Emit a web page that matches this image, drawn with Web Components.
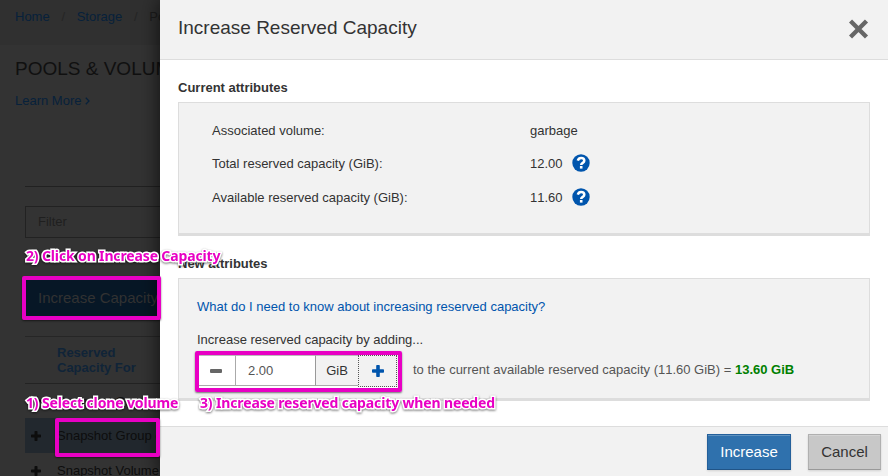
<!DOCTYPE html>
<html lang="en"><head><meta charset="utf-8"><title>Increase Reserved Capacity</title>
<style>
html,body{margin:0;height:476px;overflow:hidden;background:#333}
body{font:13px/15px "Liberation Sans",Arial,sans-serif;color:#333}
</style></head><body>
<app-screen></app-screen>
<script>
const define=(name,html)=>customElements.define(name,class extends HTMLElement{
  constructor(){super();const t=document.createElement('template');t.innerHTML=html;
    this.attachShadow({mode:'open'}).append(t.content.cloneNode(true));}
});

define('plus-icon',`<style>:host{display:block;width:var(--s,10px);height:var(--s,10px)}svg{display:block}</style>
<svg width="100%" height="100%" viewBox="0 0 12 12"><path fill="currentColor" d="M5 0h2q.8 0 .8.8v3.4h3.4q.8 0 .8.8v2q0 .8-.8.8H7.8v3.4q0 .8-.8.8H5q-.8 0-.8-.8V7.8H.8Q0 7.8 0 7V5q0-.8.8-.8h3.4V.8Q4.200 0 5 0z"/></svg>`);

define('help-icon',`<style>:host{display:block;width:18px;height:18px}svg{display:block}</style>
<svg width="18" height="18" viewBox="0 0 18 18"><circle cx="9" cy="9" r="8.7" fill="#0055ad"/><path d="M5.800 6.700C6.300 5.100 7.400 4.100 9.100 4.100C10.900 4.100 12.300 5.100 12.300 6.700C12.300 8.900 9.200 8.800 9.200 11" fill="none" stroke="#fff" stroke-width="2.500"/><path d="M7.900 12h2.600v2.600H7.900z" fill="#fff"/></svg>`);

define('table-row',`<style>:host{display:flex;height:35px;box-sizing:border-box;align-items:center;padding-left:6px;gap:16px;color:#0d0d0d;white-space:nowrap}
plus-icon{flex:none}</style><plus-icon></plus-icon><span><slot></slot></span>`);

define('page-backdrop',`<style>
:host{display:block;width:160px;height:476px;overflow:hidden;background:#333;white-space:nowrap;color:#111}
nav{height:45px;box-sizing:border-box;padding:9px 15px;background:#303030;display:flex;color:#1c1c1c}
nav>*{flex:none}
a{color:#07213b}nav i{font-style:normal;width:27px;text-align:center;color:#252525}
h1{font-size:19px;font-weight:400;line-height:22px;margin:13px 0 0 15px;color:#101010}
.learn{display:flex;align-items:center;gap:4px;margin:13px 0 0 15px;color:#07213b}
.body{margin:78px 0 0 25px;border-top:1px solid #212121;padding-top:19px}
.filter{height:32px;box-sizing:border-box;border:1px solid #222;padding:7px 12px;color:#1f1f1f;width:200px}
.btn{margin-top:41px;height:38px;width:170px;box-sizing:border-box;background:#071726;padding-left:13px;font-size:15px;line-height:38px;color:#323232}
.head{margin-top:19px;height:48px;box-sizing:border-box;border-top:1px solid #262626;border-bottom:1px solid #232323;padding:8px 0 0 32px;font-weight:700;color:#102438}
.sel{background:#22282e}.first{height:34px}
</style>
<nav><a>Home</a><i>/</i><a>Storage</a><i>/</i><span>Pools &amp; Volumes</span></nav>
<h1>POOLS &amp; VOLUMES</h1>
<div class="learn">Learn More<svg width="5" height="8" viewBox="0 0 5 8"><path d="M.8.7 4 4 .8 7.300" fill="none" stroke="currentColor" stroke-width="1.300"/></svg></div>
<div class="body"><div class="filter">Filter</div><div class="btn">Increase Capacity</div>
<div class="head">Reserved<br>Capacity For</div>
<table-row class="first">Snapshot Group</table-row><table-row class="sel">Snapshot Group c</table-row><table-row>Snapshot Volume</table-row></div>`);

define('attribute-row',`<style>:host{display:grid;grid-template-columns:318px auto;align-items:center;height:18px}
div{display:flex;align-items:center;gap:9px;font-kerning:none}</style><span><slot name="label"></slot></span><div><slot></slot></div>`);

define('attribute-panel',`<style>:host{display:block}h2{font-size:13px;line-height:15px;margin:0 0 7px}
section{box-sizing:border-box;height:var(--h);background:#f2f2f2;border:1px solid #ddd;border-bottom-width:3px;padding:var(--p)}</style>
<h2><slot name="title"></slot></h2><section><slot></slot></section>`);

define('capacity-stepper',`<style>
:host{display:flex;flex:none;width:200px;height:34px;background:#fff;color:#333}
div{box-sizing:border-box;height:31px;border-bottom:1px solid #aaa;border-top:1px solid #bbb;display:flex;align-items:center}
.minus{width:38px;padding-left:13px}.minus i{width:12px;height:4px;background:#666;border-radius:1px}
.value{width:80px;border-left:1px solid #aaa;padding-left:12px;color:#555}
.unit{width:43px;background:#f2f2f2;border-left:1px solid #999;justify-content:center}
.plus{width:39px;height:32px;background:#f2f2f2;color:#0055ad;border:1px dotted #555;justify-content:center;--s:12px}
</style><div class="minus"><i></i></div><div class="value">2.00</div><div class="unit">GiB</div><div class="plus"><plus-icon></plus-icon></div>`);

define('action-button',`<style>:host{display:block;box-sizing:border-box;height:36px;font-size:15px;line-height:34px;text-align:center;
border:1px solid var(--b);border-bottom-color:var(--bb);background:var(--bg);color:var(--fg);box-shadow:inset 0 1px var(--hi),0 1px 2px #0002}</style><slot></slot>`);

define('capacity-dialog',`<style>
:host{display:flex;flex-direction:column;height:476px;width:728px;background:#fff;box-shadow:0 0 20px #000b;position:relative;color:#333}
header{height:60px;box-sizing:border-box;border-bottom:1px solid #ddd;background:#f2f2f2;display:flex;justify-content:space-between;align-items:center;padding:0 19px 1px 18px}
h1{font-size:19px;line-height:22px;font-weight:400;margin:0 0 2px}
main{flex:1;padding:20px 18px 0;display:grid;align-content:start;gap:20px}
.rows{display:grid;grid-template-rows:18px 18px 18px;row-gap:15px}
.rows attribute-row:last-child{margin-top:1px}
footer{height:50px;box-sizing:border-box;border-top:1px solid #ddd;background:#f2f2f2;padding:7px 7px 0;display:flex;justify-content:flex-end;gap:17px}
.link{color:#0055ad}.add{margin:18px 0 8px}.step{display:flex;gap:16px}.step>span{line-height:30px;color:#555;white-space:nowrap;font-kerning:none}.step b{color:#008000}
.ok{width:84px;--bg:#2f71ad;--b:#24609b;--bb:#205487;--hi:#5f92bf;--fg:#fff}
.no{width:73px;--bg:#c8c8c8;--b:#b0b0b0;--bb:#999;--hi:#d3d3d3;--fg:#333}
</style>
<header><h1>Increase Reserved Capacity</h1><svg width="20" height="20" viewBox="0 0 20 20"><path d="M1.500 2 17.500 18M17.500 2 1.500 18" stroke="#666" stroke-width="4.400"/></svg></header>
<main>
<attribute-panel style="--h:134px;--p:18px 33px"><span slot="title">Current attributes</span><div class="rows">
<attribute-row><span slot="label">Associated volume:</span>garbage</attribute-row>
<attribute-row><span slot="label">Total reserved capacity (GiB):</span>12.00 <help-icon></help-icon></attribute-row>
<attribute-row><span slot="label">Available reserved capacity (GiB):</span>11.60 <help-icon></help-icon></attribute-row></div></attribute-panel>
<attribute-panel style="--h:123px;--p:20px 18px"><span slot="title">New attributes</span>
<div class="link">What do I need to know about increasing reserved capacity?</div>
<div class="add">Increase reserved capacity by adding...</div>
<div class="step"><capacity-stepper></capacity-stepper><span>to the current available reserved capacity (11.60 GiB) = <b>13.60 GiB</b></span></div>
</attribute-panel></main>
<footer><action-button class="ok">Increase</action-button><action-button class="no">Cancel</action-button></footer>`);

define('note-box',`<style>:host{position:absolute;box-sizing:border-box;border:4px solid #e800c4;border-radius:2px;box-shadow:0 1px 2px #0008;z-index:3}</style>`);
define('note-text',`<style>:host{position:absolute;z-index:4;white-space:nowrap;font:700 14px/18px "Noto Sans","Open Sans",sans-serif;letter-spacing:-.14px;color:#e800c4}
span{-webkit-text-stroke:3px #fff;paint-order:stroke fill;filter:drop-shadow(0 1px 1px #0008)}</style><span><slot></slot></span>`);

define('app-screen',`<style>:host{display:grid;grid-template-columns:160px 728px;position:relative;width:888px;height:476px;overflow:hidden}</style>
<page-backdrop></page-backdrop><capacity-dialog></capacity-dialog>
<note-box style="left:22px;top:276px;width:139px;height:44px"></note-box>
<note-box style="left:55px;top:418px;width:105px;height:39px"></note-box>
<note-box style="left:195px;top:351px;width:207px;height:41px"></note-box>
<note-text style="left:26px;top:247px">2) Click on Increase Capacity</note-text>
<note-text style="left:26px;top:394px">1) Select clone volume</note-text>
<note-text style="left:200px;top:394px">3) Increase reserved capacity when needed</note-text>`);
</script></body></html>
